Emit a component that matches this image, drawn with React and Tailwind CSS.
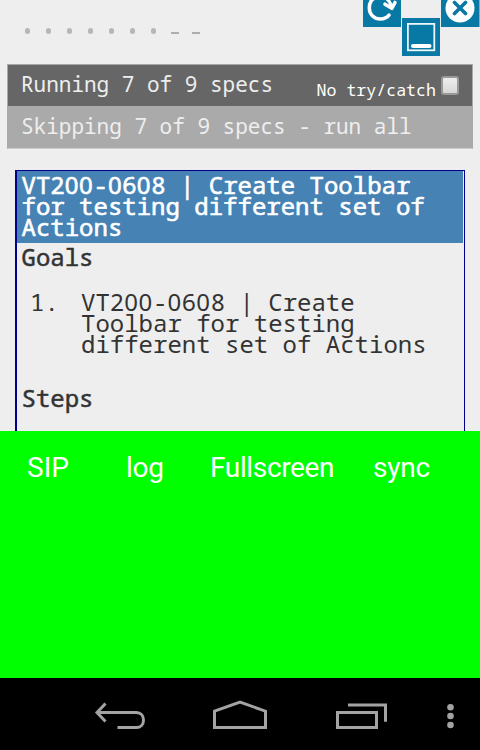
// Plain zeros, kept on the monospaced grid
function Zeros({ children }) {
  return <span className='font-["Noto_Sans",sans-serif] tracking-[0.028em]'>{children}</span>;
}

function SpecId() {
  return (
    <>
      VT2<Zeros>00</Zeros>-<Zeros>0</Zeros>6<Zeros>0</Zeros>8
    </>
  );
}

function Results() {
  const specs = ["run", "run", "run", "run", "run", "run", "run", "skip", "skip"];
  return (
    <div className="flex h-[64px] items-start pl-[25px] pt-[28px]">
      {specs.map((s, i) => (
        <span key={i} className="flex h-[6px] w-[21px] shrink-0">
          {s === "run" ? (
            <span className="h-[6px] w-[5px] rounded-full bg-[#b7b7b7]" />
          ) : (
            <span className="-ml-[1px] mt-[4px] h-[2px] w-[8px] bg-[#adadad]" />
          )}
        </span>
      ))}
    </div>
  );
}

function TopButtons() {
  return (
    <svg className="absolute left-[363px] top-0" width="117" height="56" viewBox="0 0 117 56" fill="none">
      <path d="M0 0h38v27H0zM39 18h38v38H39zM78 0h38.500v27H78z" fill="#0878a4" />
      <path d="M13-2.500C8.500-1 6.300 3.500 6.300 8c0 6.500 5 11 11.200 11 3.500 0 6.500-1.300 8.500-3.800" stroke="#fff" strokeWidth="3.500" strokeLinecap="round" />
      <path d="M20-3c4 1 7 4.500 8 9" stroke="#fff" strokeWidth="3.200" />
      <path d="M22 4.200 28.800 8.300 32 2.500" stroke="#fff" strokeWidth="3.600" strokeLinecap="round" strokeLinejoin="round" />
      <rect x="44.900" y="23.900" width="26.400" height="26.400" stroke="#edf6f9" strokeWidth="1.800" />
      <path d="M50 46h16.500" stroke="#fff" strokeWidth="4" strokeLinecap="round" />
      <circle cx="97" cy="8" r="14.500" fill="#fff" />
      <path d="m91.500 2.500 11 11m0-11-11 11" stroke="#0878a4" strokeWidth="3.600" strokeLinecap="round" />
    </svg>
  );
}

export default function App() {
  return (
    <div className="h-[750px] w-[480px] overflow-hidden bg-black">
      <main className='relative h-[431px] overflow-hidden bg-[#eee] font-["Droid_Sans_Mono","Noto_Sans_Mono","DejaVu_Sans_Mono",monospace] text-[#333]'>
        <Results />
        <TopButtons />
        <section className="mx-[7px] border border-x-[#aaa] border-t-[#a5a5a5] border-b-[#ccc] text-[21px] leading-[41px] text-[#eee]">
          <div className="flex h-[41px] justify-between bg-[#666] pl-[13px] pr-[13px]">
            <span className="-mt-px whitespace-pre">Running 7 of 9 specs</span>
            <label className="flex text-[16.600px] text-white">
              <span className="mt-[4px] whitespace-pre">No try/catch</span>
              <span className="ml-[5px] mt-[11px] h-[19px] w-[18px] rounded-[3px] border-2 border-[#999] bg-gradient-to-b from-[#eee] to-[#d8d8d8]" />
            </label>
          </div>
          <div className="h-[42px] whitespace-pre bg-[#aaa] pl-[13px]">Skipping 7 of 9 specs - run all</div>
        </section>
        <article className="mx-[15px] mt-[21px] h-[300px] border border-l-2 border-[#00008b] text-[24px] leading-[21px]">
          <h1 className="mr-px h-[72px] bg-[#4682b4] pl-[4.500px] pt-[3px] text-white [-webkit-text-stroke:0.600px_white]">
            <span className="block h-[21px] whitespace-pre"><SpecId /> | Create Toolbar</span>
            <span className="block h-[21px] whitespace-pre">for testing different set of</span>
            <span className="block h-[21px] whitespace-pre">Actions</span>
          </h1>
          <h2 className="mt-[3px] pl-[4.500px] [-webkit-text-stroke:0.500px_#333]">Goals</h2>
          <div className="mt-[24px] flex pl-[13px]">
            <span className="w-[51px]">1.</span>
            <div>
              <span className="block h-[21px] whitespace-pre"><SpecId /> | Create</span>
              <span className="block h-[21px] whitespace-pre">Toolbar for testing</span>
              <span className="block h-[21px] whitespace-pre">different set of Actions</span>
            </div>
          </div>
          <h2 className="mt-[33px] pl-[4.500px] [-webkit-text-stroke:0.500px_#333]">Steps</h2>
        </article>
      </main>
      <nav className="flex h-[247px] bg-[#0f0] pt-[20px] font-[Roboto,sans-serif] text-[28px] leading-[34px] text-white">
        <span className="w-[99px] pl-[27px]">SIP</span>
        <span className="w-[84px] pl-[27px] tracking-[-0.3px]">log</span>
        <span className="w-[164px] pl-[27px] tracking-[-0.35px]">Fullscreen</span>
        <span className="pl-[26px] tracking-[-0.2px]">sync</span>
      </nav>
      <footer className="h-[72px] bg-black">
        <svg width="480" height="72" viewBox="0 678 480 72" fill="none" stroke="#a3a3a3" strokeWidth="3">
          <path d="M97 712.500h39.500c4 0 7 3 7 7.500s-3 7.500-7 7.500h-19M105.500 703.500l-8.500 9 8.500 9" />
          <path d="M214.500 711.200 240 702l25.500 9.200v16.300h-51z" />
          <path d="M337.500 712.500h39v15h-39zM348 704.900h37.500v16.800" />
          <g fill="#a3a3a3" stroke="none">
            <circle cx="450.500" cy="707.300" r="3.300" />
            <circle cx="450.500" cy="716" r="3.300" />
            <circle cx="450.500" cy="725" r="3.300" />
          </g>
        </svg>
      </footer>
    </div>
  );
}
